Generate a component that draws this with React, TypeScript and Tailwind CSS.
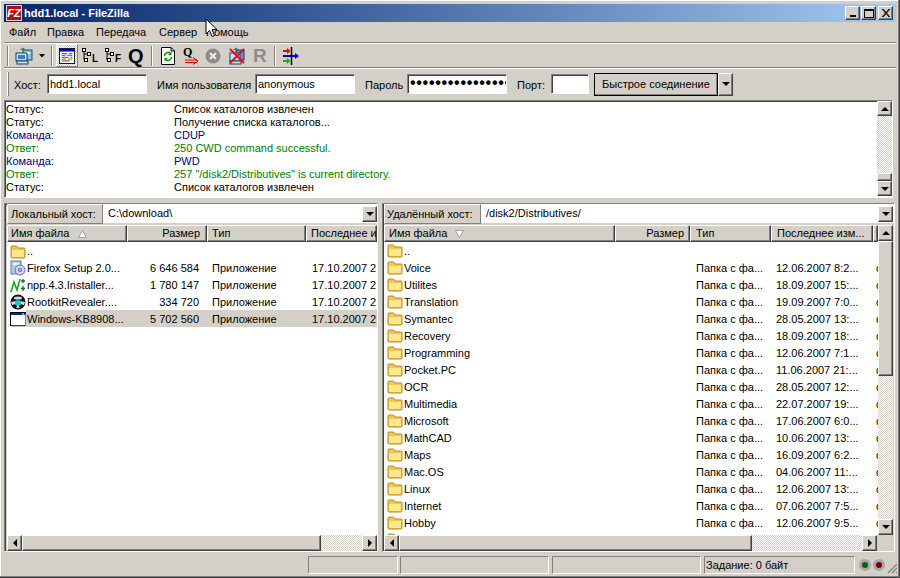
import React from "react";

const raised = "border-t border-l border-t-white border-l-white border-r border-b border-r-[#404040] border-b-[#404040] shadow-[inset_-1px_-1px_0_#808080] bg-[#d4d0c8]";
const sunken = "border-t border-l border-t-[#808080] border-l-[#808080] border-r border-b border-r-white border-b-white shadow-[inset_1px_1px_0_#404040]";
const sunkenFlat = "border-t border-l border-t-[#808080] border-l-[#808080] border-r border-b border-r-white border-b-white";
const dither = "bg-[repeating-conic-gradient(#ffffff_0_25%,#d4d0c8_0_50%)] bg-[length:2px_2px]";
const fontCls = "font-['Liberation_Sans','DejaVu_Sans',sans-serif] text-[11px]";

function Arrow({ d }: { d: "up" | "down" | "left" | "right" }) {
  const p = { up: "M4 1 L0 5 H8 Z", down: "M0 1 H8 L4 5 Z", left: "M5 0 V8 L1 4 Z", right: "M1 0 V8 L5 4 Z" }[d];
  const box = d === "up" || d === "down" ? "0 0 8 6" : "0 0 6 8";
  const cls = d === "up" || d === "down" ? "w-[8px] h-[6px]" : "w-[6px] h-[8px]";
  return <svg viewBox={box} className={cls}><path d={p} fill="#000" /></svg>;
}

function SBtn({ d, cls }: { d: "up" | "down" | "left" | "right"; cls: string }) {
  return <div className={`${raised} ${cls} flex items-center justify-center shrink-0`}><Arrow d={d} /></div>;
}

function Folder() {
  return (
    <svg viewBox="0 0 16 16" className="w-[16px] h-[16px] shrink-0">
      <path d="M1 4 V14 Q1 15 2 15 H14 Q15 15 15 14 V5.5 Q15 5 14 5 H8 L6.5 3 H2 Q1 3 1 4 Z" fill="#f2c64c" stroke="#b98a20" strokeWidth="1" />
      <path d="M2 7 H14 V14 H2 Z" fill="#fde98c" />
    </svg>
  );
}

function FirefoxIcon() {
  return (
    <svg viewBox="0 0 16 16" className="w-[16px] h-[16px] shrink-0">
      <rect x="1" y="1" width="10" height="13" fill="#b8cce4" stroke="#5b7ba8" />
      <rect x="3" y="3" width="6" height="2" fill="#eef3fa" />
      <circle cx="10" cy="10" r="5" fill="#cfd3f0" stroke="#6a6fb8" />
      <circle cx="10" cy="10" r="2" fill="#5f6bd0" />
      <circle cx="10" cy="10" r="0.8" fill="#fff" />
    </svg>
  );
}

function NppIcon() {
  return (
    <svg viewBox="0 0 16 16" className="w-[16px] h-[16px] shrink-0">
      <path d="M1 15 L4 5 L7 13 L10 2" fill="none" stroke="#18a818" strokeWidth="1.6" />
      <path d="M13 2 V6 M11 4 H15 M13 9 V14 M11 11.5 H15" stroke="#107010" strokeWidth="1.3" />
    </svg>
  );
}

function RootkitIcon() {
  return (
    <svg viewBox="0 0 16 16" className="w-[16px] h-[16px] shrink-0">
      <circle cx="8" cy="8" r="7.5" fill="#111" />
      <ellipse cx="8" cy="4" rx="4" ry="1.5" fill="#d8d8d8" />
      <path d="M1 8 L6 7 V10 L2 11 Z M15 8 L10 7 V10 L14 11 Z" fill="#d8d8d8" />
      <circle cx="8" cy="9" r="3" fill="#18c8d8" />
      <path d="M6 14 L8 11 L10 14 Z" fill="#d8d8d8" />
    </svg>
  );
}

function WinIcon() {
  return (
    <svg viewBox="0 0 16 16" className="w-[16px] h-[16px] shrink-0">
      <rect x="0.5" y="1.5" width="15" height="13" fill="#fff" stroke="#000" />
      <rect x="1" y="2" width="14" height="2" fill="#0a2a9c" />
      <rect x="12" y="2.5" width="2" height="1" fill="#fff" />
      <path d="M15.5 3 V15 H2" stroke="#808080" fill="none" />
    </svg>
  );
}

function TreeIcon({ letter }: { letter: string }) {
  return (
    <div className="relative w-[18px] h-[18px] shrink-0">
      <svg viewBox="0 0 18 18" className="w-[18px] h-[18px]">
        <path d="M3 3 V13 M3 7 H9 M3 13 H7" stroke="#000" fill="none" />
        <rect x="1.5" y="1.5" width="3" height="3" fill="#fff" stroke="#000" />
        <rect x="6.5" y="5.5" width="3" height="3" fill="#fff" stroke="#000" />
        <rect x="3.5" y="11.5" width="3" height="3" fill="#fff" stroke="#000" />
      </svg>
      <span className="absolute left-[11px] top-[6px] font-['Liberation_Sans',sans-serif] font-bold text-[10px] leading-[12px] text-black">{letter}</span>
    </div>
  );
}

function Sep() {
  return <div className="w-[2px] h-[20px] bg-[#808080] border-r border-r-white shrink-0" />;
}

function Grip() {
  return <div className="w-[2px] h-[24px] bg-white border-r border-r-[#808080] shrink-0" />;
}

function SiteIcon() {
  return (
    <svg viewBox="0 0 18 18" className="w-[18px] h-[18px] shrink-0">
      <rect x="8" y="3" width="9" height="10" fill="#7fc4d4" stroke="#14547a" />
      <rect x="10" y="5" width="5" height="2" fill="#fff" />
      <path d="M5 3 L8 0.5 L11 3 Z" fill="#1c9a2c" />
      <rect x="1" y="6" width="11" height="8" fill="#cfe4f2" stroke="#123c6c" />
      <rect x="3" y="8" width="7" height="4" fill="#2f7fd0" />
      <rect x="2" y="14" width="11" height="3" fill="#d8d8d8" stroke="#123c6c" />
    </svg>
  );
}

function LogIcon() {
  return (
    <svg viewBox="0 0 18 18" className="w-[16px] h-[16px] shrink-0">
      <rect x="0.5" y="0.5" width="17" height="17" fill="#fff" stroke="#000" />
      <rect x="1" y="1" width="16" height="3" fill="#0000c8" />
      <path d="M3 6.5 H9 M11 6.5 H15" stroke="#0000c8" />
      <path d="M3 8.5 H7 M9 8.5 H15 M3 12.5 H8 M10 12.5 H15" stroke="#00a000" />
      <path d="M3 10.5 H11 M13 10.5 H15 M3 14.5 H12" stroke="#c80000" />
    </svg>
  );
}

function RefreshIcon() {
  return (
    <svg viewBox="0 0 16 18" className="w-[16px] h-[18px] shrink-0">
      <path d="M1.5 0.5 H11 L14.5 4 V17.5 H1.5 Z" fill="#fff" stroke="#000" />
      <path d="M11 0.5 V4 H14.5" fill="none" stroke="#000" />
      <path d="M4.5 9 A3.5 3.5 0 0 1 10.5 6.5" fill="none" stroke="#109a10" strokeWidth="1.6" />
      <path d="M11.5 4.5 V8 H8 Z" fill="#109a10" />
      <path d="M11.5 10 A3.5 3.5 0 0 1 5.5 12.5" fill="none" stroke="#109a10" strokeWidth="1.6" />
      <path d="M4.5 14.5 V11 H8 Z" fill="#109a10" />
    </svg>
  );
}

function QueueIcon() {
  return (
    <div className="relative w-[16px] h-[18px] shrink-0">
      <span className="absolute left-0 -top-[2px] font-['Liberation_Serif',serif] font-bold text-[12px] leading-[14px] text-black">Q</span>
      <svg viewBox="0 0 16 18" className="absolute left-0 top-0 w-[16px] h-[18px]">
        <path d="M2 13 H14 M2 15.5 H14" stroke="#e00000" />
        <path d="M10 10.5 L15 14 L10 17.5" fill="none" stroke="#e00000" />
      </svg>
    </div>
  );
}

function CancelIcon() {
  return (
    <svg viewBox="0 0 16 16" className="w-[16px] h-[16px] shrink-0">
      <circle cx="8" cy="8" r="7.5" fill="#8c8c8c" />
      <path d="M5 5 L11 11 M11 5 L5 11" stroke="#e8e8e8" strokeWidth="2.4" />
    </svg>
  );
}

function DisconnectIcon() {
  return (
    <svg viewBox="0 0 18 18" className="w-[18px] h-[18px] shrink-0">
      <rect x="8" y="3" width="8" height="10" fill="#6f8fd8" stroke="#14307a" />
      <path d="M5 3 L8 0.5 L11 3 Z" fill="#1c9a2c" />
      <rect x="2" y="6" width="10" height="8" fill="#cfe4f2" stroke="#123c6c" />
      <rect x="2" y="14" width="11" height="3" fill="#d8d8d8" stroke="#123c6c" />
      <path d="M2 2 L16 16 M16 2 L2 16" stroke="#e81010" strokeWidth="2" />
    </svg>
  );
}

function SyncIcon() {
  return (
    <svg viewBox="0 0 18 18" className="w-[18px] h-[18px] shrink-0">
      <path d="M1 4 H6" stroke="#e00000" strokeWidth="2" />
      <path d="M5 1 L8.5 4 L5 7 Z" fill="#e00000" />
      <path d="M1 14 H6" stroke="#10b010" strokeWidth="2" />
      <path d="M5 11 L8.5 14 L5 17 Z" fill="#10b010" />
      <path d="M1 9 H14" stroke="#0000e0" strokeWidth="2" />
      <path d="M13 6 L17 9 L13 12 Z" fill="#0000e0" />
      <path d="M9.5 0 V18" stroke="#000" strokeWidth="1.5" />
    </svg>
  );
}

function Input({ w, children }: { w: string; children?: React.ReactNode }) {
  return <div className={`${sunken} ${w} h-[20px] bg-white px-[2px] leading-[18px] text-black overflow-hidden whitespace-nowrap shrink-0`}>{children}</div>;
}

const logRows: [string, string, string][] = [
  ["Статус:", "Список каталогов извлечен", "text-black"],
  ["Статус:", "Получение списка каталогов...", "text-black"],
  ["Команда:", "CDUP", "text-[#000080]"],
  ["Ответ:", "250 CWD command successful.", "text-[#008000]"],
  ["Команда:", "PWD", "text-[#000080]"],
  ["Ответ:", "257 \"/disk2/Distributives\" is current directory.", "text-[#008000]"],
  ["Статус:", "Список каталогов извлечен", "text-black"],
];

const localRows: [React.ReactNode, string, string, string, string][] = [
  [<Folder />, "..", "", "", ""],
  [<FirefoxIcon />, "Firefox Setup 2.0...", "6 646 584", "Приложение", "17.10.2007 2"],
  [<NppIcon />, "npp.4.3.Installer...", "1 780 147", "Приложение", "17.10.2007 2"],
  [<RootkitIcon />, "RootkitRevealer....", "334 720", "Приложение", "17.10.2007 2"],
  [<WinIcon />, "Windows-KB8908...", "5 702 560", "Приложение", "17.10.2007 2"],
];

const remoteRows: [string, string][] = [
  ["Voice", "12.06.2007 8:2..."],
  ["Utilites", "18.09.2007 15:..."],
  ["Translation", "19.09.2007 7:0..."],
  ["Symantec", "28.05.2007 13:..."],
  ["Recovery", "18.09.2007 18:..."],
  ["Programming", "12.06.2007 7:1..."],
  ["Pocket.PC", "11.06.2007 21:..."],
  ["OCR", "28.05.2007 12:..."],
  ["Multimedia", "22.07.2007 19:..."],
  ["Microsoft", "17.06.2007 6:0..."],
  ["MathCAD", "10.06.2007 13:..."],
  ["Maps", "16.09.2007 6:2..."],
  ["Mac.OS", "04.06.2007 11:..."],
  ["Linux", "12.06.2007 13:..."],
  ["Internet", "07.06.2007 7:5..."],
  ["Hobby", "12.06.2007 9:5..."],
  ["Games", "12.06.2007 9:5..."],
];

function Head({ w, cls, children }: { w: string; cls?: string; children?: React.ReactNode }) {
  return <div className={`${raised} ${w} ${cls ?? ""} h-[17px] leading-[15px] overflow-hidden whitespace-nowrap shrink-0`}>{children}</div>;
}

export default function App() {
  return (
    <div className={`${fontCls} w-[900px] h-[578px] relative overflow-hidden bg-[#d4d0c8] text-black flex flex-col pt-[4px] pl-[4px] pr-[4px] pb-[4px] shadow-[inset_-1px_-1px_0_#404040,inset_-2px_-2px_0_#808080,inset_1px_1px_0_#ffffff]`}>
      {/* Title */}
      <div className="h-[18px] shrink-0 flex items-center pl-[2px] pr-[3px] bg-gradient-to-r from-[#0a246a] to-[#a6caf0]">
        <div className="w-[16px] h-[16px] bg-[#b01010] border border-[#d8d8d8] text-white font-bold italic text-[11px] leading-[14px] text-center shrink-0">FZ</div>
        <div className="ml-[2px] text-white font-bold text-[11px] whitespace-nowrap">hdd1.local - FileZilla</div>
        <div className="ml-auto flex items-center">
          <div className={`${raised} w-[15px] h-[14px] flex items-end justify-center pb-[2px]`}><div className="w-[6px] h-[2px] bg-black" /></div>
          <div className={`${raised} w-[15px] h-[14px] ml-[1px] flex items-center justify-center`}><div className="w-[10px] h-[9px] border border-black border-t-2" /></div>
          <div className={`${raised} w-[15px] h-[14px] ml-[2px] flex items-center justify-center`}>
            <svg viewBox="0 0 9 8" className="w-[9px] h-[8px]"><path d="M1 0 L8 8 M2.2 0 L9 8 M8 0 L1 8 M9 0 L2.2 8" stroke="#000" strokeWidth="0.9" /></svg>
          </div>
        </div>
      </div>
      {/* Menu */}
      <div className="h-[20px] shrink-0 flex items-center pl-[5px] whitespace-nowrap">
        <span className="w-[38px] shrink-0">Файл</span>
        <span className="w-[49px] shrink-0">Правка</span>
        <span className="w-[63px] shrink-0">Передача</span>
        <span className="w-[47px] shrink-0">Сервер</span>
        <span>Помощь</span>
      </div>
      <div className="h-[2px] shrink-0 bg-[#808080] border-b border-b-white" />
      {/* Toolbar */}
      <div className="h-[23px] shrink-0 flex items-center pl-[3px]">
        <Sep />
        <div className="ml-[6px]"><SiteIcon /></div>
        <svg viewBox="0 0 6 4" className="w-[6px] h-[4px] ml-[6px] shrink-0"><path d="M0 0 H6 L3 3.5 Z" fill="#000" /></svg>
        <div className="ml-[6px]"><Sep /></div>
        <div className={`ml-[3px] w-[22px] h-[23px] flex items-center justify-center shrink-0 border border-white border-r-[#808080] border-b-[#808080] ${dither}`}><LogIcon /></div>
        <div className="ml-[3px]"><TreeIcon letter="L" /></div>
        <div className="ml-[5px]"><TreeIcon letter="F" /></div>
        <span className="ml-[6px] w-[18px] font-bold text-[20px] leading-[20px] shrink-0">Q</span>
        <div className="ml-[5px]"><Sep /></div>
        <div className="ml-[7px]"><RefreshIcon /></div>
        <div className="ml-[7px]"><QueueIcon /></div>
        <div className="ml-[6px]"><CancelIcon /></div>
        <div className="ml-[7px]"><DisconnectIcon /></div>
        <span className="ml-[7px] w-[16px] font-bold text-[19px] leading-[20px] text-[#8c8c8c] shrink-0">R</span>
        <div className="ml-[5px]"><Sep /></div>
        <div className="ml-[6px]"><SyncIcon /></div>
      </div>
      <div className="h-[2px] shrink-0 bg-[#808080] border-b border-b-white" />
      {/* Quick connect */}
      <div className="h-[29px] shrink-0 flex items-center pl-[3px] pt-[1px] whitespace-nowrap">
        <Grip />
        <span className="ml-[5px] w-[33px] shrink-0 pt-[2px]">Хост:</span>
        <Input w="w-[100px]">hdd1.local</Input>
        <span className="ml-[10px] w-[98px] shrink-0 pt-[2px]">Имя пользователя</span>
        <Input w="w-[100px]">anonymous</Input>
        <span className="ml-[10px] w-[42px] shrink-0 pt-[2px]">Пароль</span>
        <Input w="w-[100px]"><span className="font-bold text-[16px] leading-[16px] tracking-[0.7px]">••••••••••••••••</span></Input>
        <span className="ml-[10px] w-[34px] shrink-0 pt-[2px]">Порт:</span>
        <Input w="w-[38px]" />
        <div className={`${raised} ml-[5px] w-[124px] h-[23px] outline outline-1 outline-black -outline-offset-1 flex items-center justify-center shrink-0`}>Быстрое соединение</div>
        <div className={`${raised} w-[15px] h-[23px] flex items-center justify-center shrink-0`}><Arrow d="down" /></div>
      </div>
      {/* Log */}
      <div className={`${sunken} mt-[2px] mr-[3px] h-[98px] shrink-0 bg-white flex overflow-hidden`}>
        <div className="flex-1 pt-[2px] pl-[1px] overflow-hidden">
          {logRows.map((r, i) => (
            <div key={i} className="h-[13px] leading-[13px] flex whitespace-nowrap">
              <span className={`w-[168px] shrink-0 ${r[2]}`}>{r[0]}</span>
              <span className={r[2]}>{r[1]}</span>
            </div>
          ))}
        </div>
        <div className="w-[15px] shrink-0 flex flex-col pb-[1px]">
          <SBtn d="up" cls="h-[15px]" />
          <div className={`flex-1 ${dither}`} />
          <div className={`${raised} h-[8px] shrink-0`} />
          <SBtn d="down" cls="h-[15px]" />
        </div>
      </div>
      {/* Panels */}
      <div className="mt-[5px] h-[349px] shrink-0 flex">
        {/* Local */}
        <div className={`${sunken} w-[374px] shrink-0 flex flex-col pl-[2px]`}>
          <div className="h-[21px] shrink-0 flex items-start">
            <div className="w-[96px] h-[20px] shrink-0 bg-[#d4d0c8] border border-t-white border-l-white border-r-[#808080] border-b-[#808080] pl-[3px] leading-[18px] whitespace-nowrap overflow-hidden">Локальный хост:</div>
            <div className="flex-1 h-[19px] bg-white flex items-center justify-between">
              <span className="pl-[5px]">C:\download\</span>
              <SBtn d="down" cls="w-[15px] h-[16px]" />
            </div>
          </div>
          <div className="flex shrink-0">
            <Head w="w-[120px]" cls="pl-[3px]"><span className="flex items-center"><span className="w-[67px] shrink-0">Имя файла</span><svg viewBox="0 0 9 8" className="w-[9px] h-[8px]"><path d="M4.5 0.5 L8.5 7.5 H0.5 Z" fill="#fff" stroke="#a0a0a0" /></svg></span></Head>
            <Head w="w-[80px]" cls="text-right pr-[6px]">Размер</Head>
            <Head w="w-[99px]" cls="pl-[4px]">Тип</Head>
            <Head w="flex-1 min-w-0" cls="pl-[4px]">Последнее и</Head>
          </div>
          <div className="flex-1 min-h-0 bg-white overflow-hidden">
            {localRows.map((r, i) => (
              <div key={i} className="h-[17px] flex items-center whitespace-nowrap">
                <div className="w-[19px] shrink-0 pl-[3px]">{r[0]}</div>
                <div className={`flex-1 min-w-0 h-[17px] flex items-start leading-[19px] ${i === 4 ? "bg-[#d4d0c8]" : ""}`}>
                  <span className="w-[100px] shrink-0 overflow-hidden pl-[1px] h-[17px]">{r[1]}</span>
                  <span className="w-[73px] shrink-0 text-right">{r[2]}</span>
                  <span className="w-[100px] shrink-0 pl-[13px]">{r[3]}</span>
                  <span className="flex-1 min-w-0 overflow-hidden pl-[13px] h-[17px]">{r[4]}</span>
                </div>
              </div>
            ))}
          </div>
          <div className="h-[16px] shrink-0 flex">
            <SBtn d="left" cls="w-[15px]" />
            <div className={`${raised} w-[299px] shrink-0`} />
            <div className={`flex-1 ${dither}`} />
            <SBtn d="right" cls="w-[15px]" />
          </div>
        </div>
        <div className="w-[4px] shrink-0" />
        {/* Remote */}
        <div className={`${sunken} w-[513px] shrink-0 flex flex-col pl-[1px]`}>
          <div className="h-[21px] shrink-0 flex items-start">
            <div className="w-[97px] h-[20px] shrink-0 bg-[#d4d0c8] border border-t-white border-l-white border-r-[#808080] border-b-[#808080] pl-[2px] leading-[18px] whitespace-nowrap overflow-hidden">Удалённый хост:</div>
            <div className="flex-1 h-[19px] bg-white flex items-center justify-between">
              <span className="pl-[5px]">/disk2/Distributives/</span>
              <SBtn d="down" cls="w-[15px] h-[16px] mr-[1px]" />
            </div>
          </div>
          <div className="flex-1 min-h-0 flex">
            <div className="flex-1 min-w-0 flex flex-col">
              <div className="flex shrink-0">
                <Head w="w-[231px]" cls="pl-[4px]"><span className="flex items-center"><span className="w-[66px] shrink-0">Имя файла</span><svg viewBox="0 0 9 8" className="w-[9px] h-[8px]"><path d="M0.5 0.5 H8.5 L4.5 7.5 Z" fill="#fff" stroke="#a0a0a0" /></svg></span></Head>
                <Head w="w-[75px]" cls="text-right pr-[5px]">Размер</Head>
                <Head w="w-[81px]" cls="pl-[5px]">Тип</Head>
                <Head w="w-[102px]" cls="pl-[5px]">Последнее изм...</Head>
                <Head w="flex-1 min-w-0" cls="pl-[2px]">П</Head>
              </div>
              <div className="flex-1 min-h-0 bg-white overflow-hidden">
                <div className="h-[17px] flex items-start leading-[19px] whitespace-nowrap pl-[3px]"><Folder /><span className="ml-[1px]">..</span></div>
                {remoteRows.map((r, i) => (
                  <div key={i} className="h-[17px] flex items-start leading-[19px] whitespace-nowrap pl-[3px] overflow-hidden">
                    <Folder />
                    <span className="ml-[1px] w-[292px] shrink-0">{r[0]}</span>
                    <span className="w-[80px] shrink-0">Папка с фа...</span>
                    <span className="w-[100px] shrink-0">{r[1]}</span>
                    <span>drwx</span>
                  </div>
                ))}
              </div>
            </div>
            <div className="w-[15px] mr-[1px] shrink-0 flex flex-col">
              <SBtn d="up" cls="h-[16px]" />
              <div className={`${raised} h-[135px] shrink-0`} />
              <div className={`flex-1 ${dither}`} />
              <SBtn d="down" cls="h-[16px]" />
            </div>
          </div>
          <div className="h-[16px] shrink-0 flex pr-[17px]">
            <SBtn d="left" cls="w-[15px]" />
            <div className={`${raised} w-[353px] shrink-0`} />
            <div className={`flex-1 ${dither}`} />
            <SBtn d="right" cls="w-[15px]" />
          </div>
        </div>
      </div>
      {/* Status */}
      <div className="mt-[4px] h-[18px] shrink-0 flex items-stretch pl-[304px]">
        <div className={`${sunkenFlat} w-[90px] shrink-0`} />
        <div className={`${sunkenFlat} w-[149px] ml-[2px] shrink-0`} />
        <div className={`${sunkenFlat} w-[149px] ml-[3px] shrink-0`} />
        <div className={`${sunkenFlat} w-[151px] ml-[3px] shrink-0 pl-[1px] leading-[16px] whitespace-nowrap`}>Задание: 0 байт</div>
        <div className="ml-[4px] flex items-center gap-[2px] shrink-0">
          <div className="w-[12px] h-[12px] rounded-full bg-[#006400] border-[3px] border-[#a8a8a8]" />
          <div className="w-[12px] h-[12px] rounded-full bg-[#800000] border-[3px] border-[#a8a8a8]" />
        </div>
        <svg viewBox="0 0 10 12" className="w-[10px] h-[12px] self-end ml-[2px] shrink-0"><path d="M10 2 L1 11 M10 6 L5 11 M10 10 L9 11" stroke="#808080" strokeWidth="1.2" /></svg>
      </div>
      {/* Pointer */}
      <svg viewBox="0 0 14 21" className="absolute left-[205px] top-[18px] w-[14px] h-[21px]">
        <path d="M1 1 V16 L4.5 12.5 L7 18.5 L9.5 17.5 L7 11.5 H12 Z" fill="#fff" stroke="#000" />
      </svg>
    </div>
  );
}
